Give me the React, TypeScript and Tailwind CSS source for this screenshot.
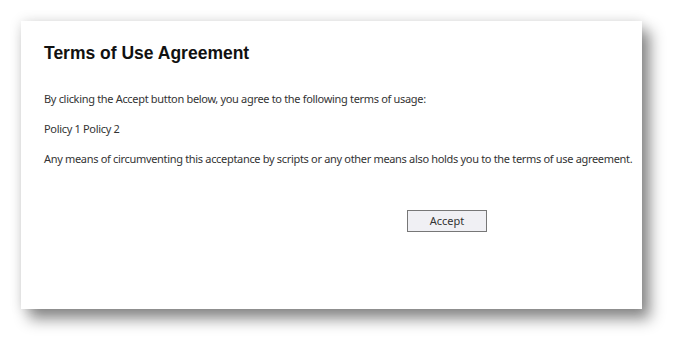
import * as React from "react";

export default function App() {
  return (
    <div className="w-[684px] h-[351px] bg-white pl-[21px] pt-[21px] overflow-hidden">
      <div
        className="w-[621px] h-[288px] bg-white flex flex-col px-[23px] pt-[20px] text-[#333] shadow-[8px_10px_14px_rgba(0,0,0,0.45),0_0_12px_rgba(0,0,0,0.12)]"
        style={{ fontFamily: '"Noto Sans", sans-serif' }}
      >
        <h1
          className="text-[17.5px] font-bold leading-[24px] text-[#111]"
          style={{ fontFamily: '"Liberation Sans", Arial, sans-serif' }}
        >
          Terms of Use Agreement
        </h1>
        <div className="text-[11px] leading-[14px] mt-[27px] flex flex-col gap-[16px] tracking-[-0.32px] whitespace-nowrap">
          <p>By clicking the Accept button below, you agree to the following terms of usage:</p>
          <p>Policy 1 Policy 2</p>
          <p>Any means of circumventing this acceptance by scripts or any other means also holds you to the terms of use agreement.</p>
        </div>
        <div className="flex mt-[44px] pl-[363px]">
          <button className="w-[80px] h-[22px] border border-[#777] bg-[#f0f0f4] text-[11px] text-[#333]">
            Accept
          </button>
        </div>
      </div>
    </div>
  );
}
